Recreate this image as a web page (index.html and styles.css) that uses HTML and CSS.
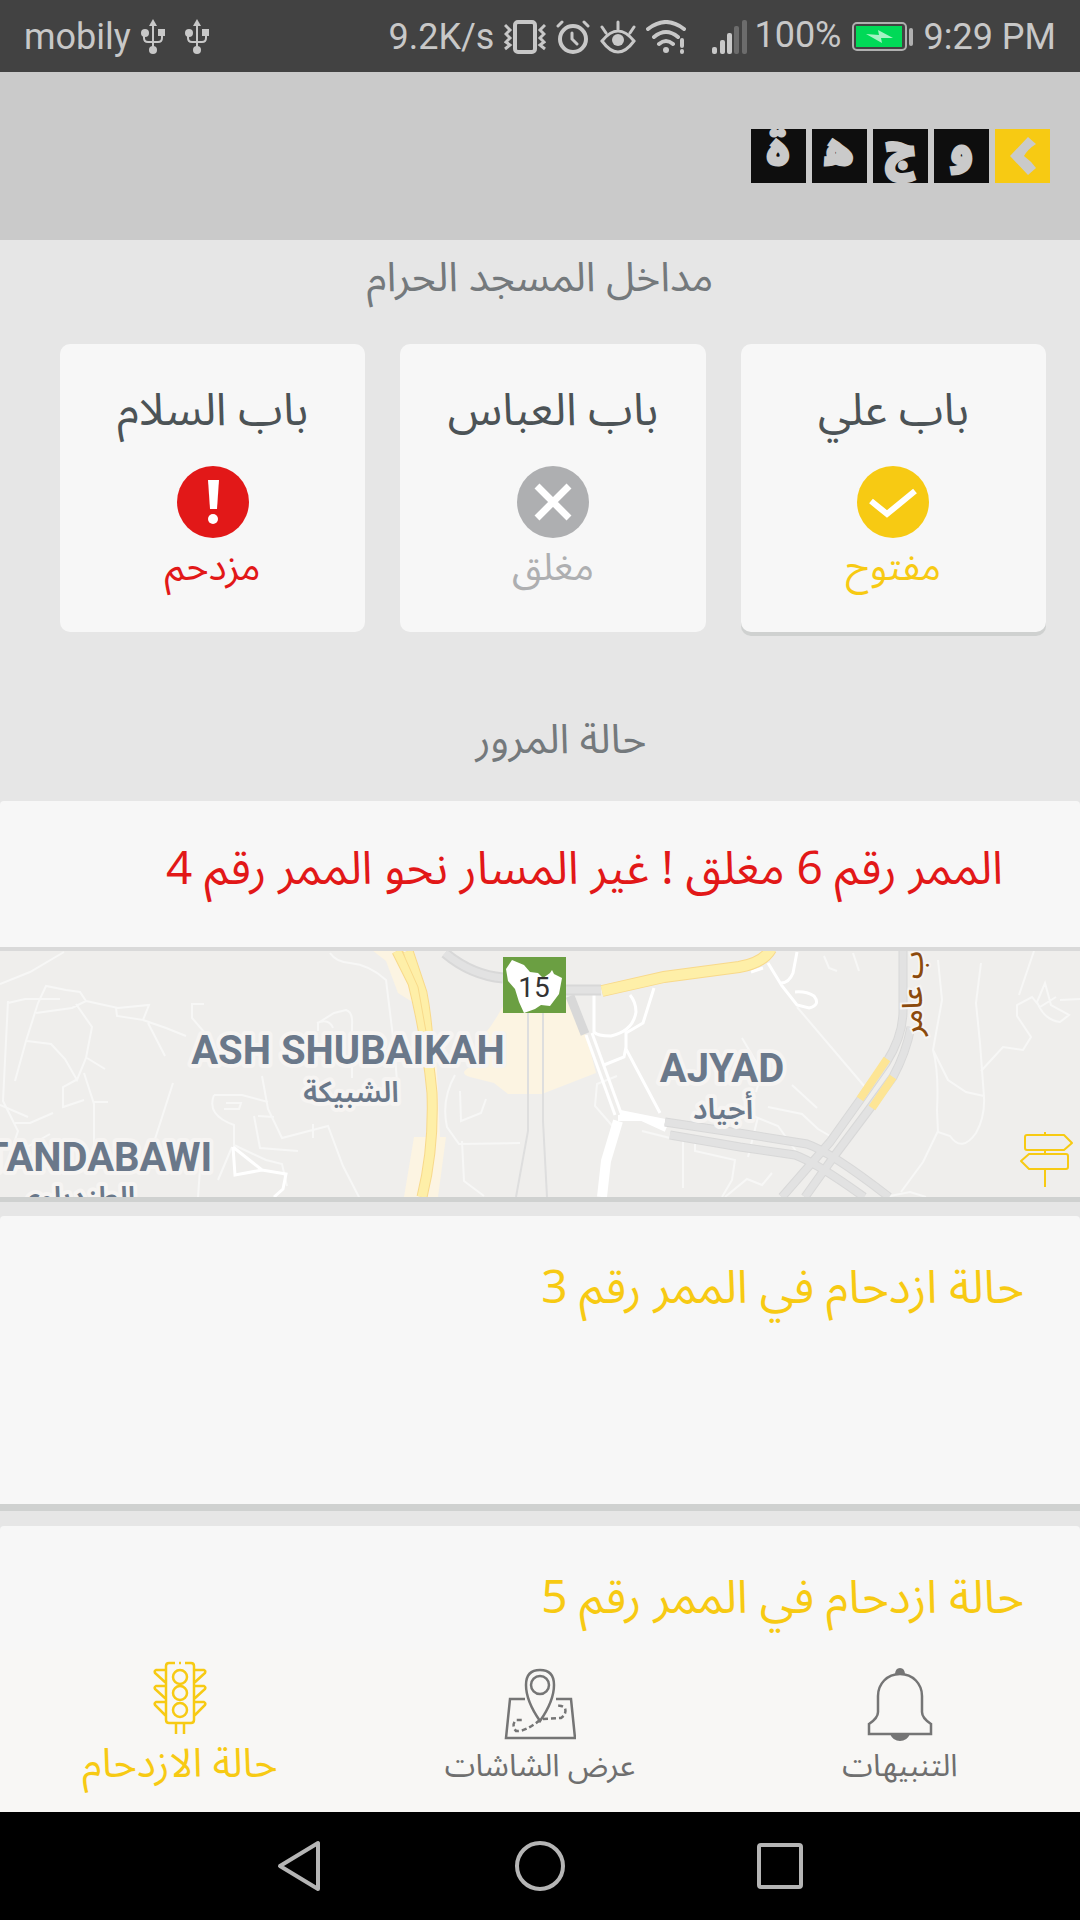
FILE: index.html
```html
<!DOCTYPE html>
<html lang="ar" dir="rtl">
<head>
  <meta charset="UTF-8">
  <meta name="viewport" content="width=device-width, initial-scale=1.0">
  <title>وجهة</title>
<link rel="stylesheet" href="styles.css">
</head>
<body>
<div class="status-bar" dir="ltr">
  <div class="status-left">
    <span>mobily</span>
    <svg class="usb" width="24" height="36" viewBox="0 0 24 36"><path d="M12 5V31M3 14v5q0 4 4 4h10q4 0 4-4v-5" fill="none" stroke="#c8c8c8" stroke-width="2"/><path d="M12 0l4 7H8z" fill="#c8c8c8"/><circle cx="4" cy="14" r="4" fill="#c8c8c8"/><path d="M17 10h7v7h-7z" fill="#c8c8c8"/><circle cx="12" cy="31" r="4" fill="#c8c8c8"/></svg>
    <svg class="usb" width="24" height="36" viewBox="0 0 24 36"><path d="M12 5V31M3 14v5q0 4 4 4h10q4 0 4-4v-5" fill="none" stroke="#c8c8c8" stroke-width="2"/><path d="M12 0l4 7H8z" fill="#c8c8c8"/><circle cx="4" cy="14" r="4" fill="#c8c8c8"/><path d="M17 10h7v7h-7z" fill="#c8c8c8"/><circle cx="12" cy="31" r="4" fill="#c8c8c8"/></svg>
  </div>
  <div class="status-right">
    <span>9.2K/s</span>
    <!-- vibrate -->
    <svg width="42" height="34" viewBox="0 0 42 34" fill="none" stroke="#c8c8c8"><rect x="11" y="2" width="20" height="30" rx="3" stroke-width="4"/><path d="M1 5l5 5-4 4 4 4-4 4 4 3-5 4M41 5l-5 5 4 4-4 4 4 4-4 3 5 4" stroke-width="3"/></svg>
    <!-- alarm -->
    <svg width="34" height="34" viewBox="0 0 34 34" fill="none" stroke="#c8c8c8" stroke-width="4" stroke-linecap="round"><circle cx="17" cy="19" r="13"/><path d="M16 13v6l5 5M2 6l4-4M32 6l-4-4" stroke-width="3"/></svg>
    <!-- eye -->
    <svg width="36" height="34" viewBox="0 0 36 34" fill="none" stroke="#c8c8c8" stroke-width="3" stroke-linecap="round"><path d="M2 21Q10 11 18 11t16 10Q26 32 18 32T2 21zM18 2v8M2 7l4 6M34 7l-4 6"/><circle cx="18" cy="20" r="6" fill="#c8c8c8" stroke="none"/></svg>
    <!-- wifi -->
    <svg width="40" height="34" viewBox="0 0 40 34" fill="none" stroke="#c8c8c8" stroke-width="4" stroke-linecap="round"><path d="M2 9q18-14 36 0M8 17q12-10 24 0M13 24q7-6 14 0M36 20v6M36 31v1"/><circle cx="20" cy="30" r="3" fill="#c8c8c8" stroke="none"/></svg>
    <!-- signal -->
    <svg class="signal" width="36" height="34" viewBox="0 0 36 34"><g fill="#c8c8c8"><rect x="0" y="27" width="5" height="7" rx="2"/><rect x="8" y="20" width="5" height="14" rx="2"/><rect x="15" y="13" width="5" height="21" rx="2"/></g><g fill="#6c6c6c"><rect x="22" y="6" width="5" height="28" rx="2"/><rect x="30" y="0" width="5" height="34" rx="2"/></g></svg>
    <span class="percent">100%</span>
    <svg class="battery" width="62" height="30" viewBox="0 0 62 30"><rect x="1" y="1" width="53" height="27" rx="4" fill="none" stroke="#b0b0b0" stroke-width="2"/><rect x="4" y="4" width="46" height="21" fill="#00d957"/><path d="M14 12l13 1-1-5 15 8-12 0 1 5z" fill="#a5f3c4"/><rect x="57" y="6" width="4" height="18" rx="2" fill="#b0b0b0"/></svg>
    <span>9:29 PM</span>
  </div>
</div>

<header class="header">
  <div class="logo">
    <span class="logo-box logo-arrow"><svg width="26" height="38" viewBox="0 0 26 38"><path d="M18 0l8 7q-8 5-12 12 7 5 12 12l-8 7L0 19z" fill="#cacaca"/></svg></span>
    <span class="logo-box">و</span>
    <span class="logo-box">ج</span>
    <span class="logo-box">ه&zwj;</span>
    <span class="logo-box">ة</span>
  </div>
</header>

<main class="content">
  <h2 class="section-title">مداخل المسجد الحرام</h2>
  <div class="gates">
    <div class="gate open">
      <h3>باب علي</h3>
      <svg width="72" height="72" viewBox="0 0 72 72"><circle cx="36" cy="36" r="36" fill="#f7ca13"/><path d="M14 35l16 13 28-23" fill="none" stroke="#fff" stroke-width="6"/></svg>
      <p>مفتوح</p>
    </div>
    <div class="gate closed">
      <h3>باب العباس</h3>
      <svg width="72" height="72" viewBox="0 0 72 72"><circle cx="36" cy="36" r="36" fill="#aeafb1"/><path d="M20 20l32 32M52 20L20 52" fill="none" stroke="#fff" stroke-width="7"/></svg>
      <p>مغلق</p>
    </div>
    <div class="gate crowded">
      <h3>باب السلام</h3>
      <svg width="72" height="72" viewBox="0 0 72 72"><circle cx="36" cy="36" r="36" fill="#e21818"/><path d="M31 14h11l-2 29h-7z" fill="#fff"/><circle cx="36" cy="53" r="5" fill="#fff"/></svg>
      <p>مزدحم</p>
    </div>
  </div>

  <h2 class="section-title traffic-title">حالة المرور</h2>
  <div class="alert"><p>الممر رقم 6 مغلق ! غير المسار نحو الممر رقم 4</p></div>

  <div class="map">
    <svg viewBox="0 0 1080 246" preserveAspectRatio="xMidYMid slice">
      <rect width="1080" height="246" fill="#efeeec"/>
      <!-- areas -->
      <path d="M350 0h64l14 50 8 50 4 86h6l-8 60h-34l10-60h18l-6-80-12-54-16-10-12-32-18-14z" fill="#fcf4e2"/>
      <path d="M503 55Q494 72 484 84l-14 32q-12 6 0 10l24 6 14 11h34l54-21-9-35-15-38-10-4z" fill="#fcf4e2"/>
      <!-- side streets -->
      <g fill="none" stroke="#f7f7f6" stroke-width="2">
        <path d="M0 33l30-12L64 1M8 52l17-4h35M15 130L26 90l12-38 8-17 20 4 14 2 6 9-14 7-36 5M86 50l32 7 31-3-6 15-26-4-1-8M143 69l23 8 20 8M148 72l17 33M27 90l24 3 14 15 12 21 9-22 6-31-16-23M87 107l18 11M76 129l-13 7v20l21-7M84 122l10 31v42M94 151h14M8 50L3 150l15 30-10 30M0 154l28 12M15 172h15l23-10M20 200l30-17M173 132l-18 56"/>
        <path d="M204 53h-12v14l18 21M330 2q6 9 20 10 20 2 36 17l8 65 5 60M318 80v-8l16-10 12-3q7 2 6 15v53M317 72q12-5 16 5M262 125l6 33 14 29 46-12 15 40 18 35M214 144h28l26 7M214 144q-8 20 20 30v20l32 15 16 4 5 22M258 165l16 1M226 152h15l-2 6h-15M254 165l6 32 38 3M313 173v14M455 124q-14 25-8 52l12 17 61-1M460 140l1 30 20-8 5-14M462 190l2 40 20 15M198 246l4-56M232 196l-14 33"/>
        <path d="M617 125l-20 8-2 22 20 23M642 180l32 8M683 185v52M728 155l50 20 18 25M695 188v12l40 9-3 20-10 17M758 166l-10 40M768 156l34 7 16 15 12 7M792 134l25 23M742 87l20 34-6 20M780 200l18 4 20 13M938 9l4 40-9 50 15 30 18 12 18 4M933 99q6 22 4 60l1 22 12 4q12 17 26-3 9-16 8-36l-4-54-4-40 5-40M938 180l-15 31-22 30M981 120l22-24 20 3 8-13-14-21V54l15-8 8 10 16-10M1034 0l-15 44M1060 49l20-1M1045 32l6 22 18 10-9 7q-16-2-23-20z"/>
        <path d="M797 56l68 80M824 5l5 12 8 3M853 2l6 18M725 246l22-18 15 6 10-12M885 246l25-5 16 5"/>
      </g>
      <g fill="none" stroke="#fff" stroke-width="3">
        <path d="M233 196l2 28 27-5 24 4-3 15-9 8M233 196l29 23M797 1l-4 21q-4 10-12 10M751 21l12-4M594 44v37q3 4 17 4 22-5 25-24 0-10-6-17M654 37l-11 35-17 10 0 16 34 64M626 96l-2 10-20 8M768 12l14 23 15 19 12 3q12-3 5-12-8-5-19-4"/>
        <path d="M586 84l29 80M592 82l29 80"/>
        <path d="M666 178l-24-11h-24M620 162l45 9" stroke-width="6"/>
        <path d="M618 170l-12 40-4 36" stroke-width="10"/>
      </g>
      <!-- gray roads -->
      <g fill="none" stroke="#d8d8d8" stroke-width="9">
        <path d="M445 2q26 22 58 25M565 39h36" stroke-width="11"/>
        <path d="M570 45l15 38"/>
        <path d="M665 171l80 12 62 10q24 8 82 53"/>
        <path d="M670 184l70 12 55 8q22 8 69 42"/>
        <path d="M903 0v60q0 25-17 52l-26 37-30 42-48 55"/>
        <path d="M911 76q-5 26-18 50l-25 34-33 44-30 42"/>
      </g>
      <g fill="none" stroke="#e2e2e2" stroke-width="7">
        <path d="M445 2q26 22 58 25M565 39h36M665 171l80 12 62 10q24 8 82 53M670 184l70 12 55 8q22 8 69 42"/>
        <path d="M903 0v60q0 25-17 52l-26 37-30 42-48 55M911 76q-5 26-18 50l-25 34-33 44-30 42"/>
      </g>
      <path d="M528 60v120l-12 66M543 60v110l4 76" fill="none" stroke="#dedede" stroke-width="2"/>
      <!-- highways -->
      <g fill="none">
        <path d="M397 0l16 32q14 56 19 110 2 56-10 104M408 0l14 42q4 20 6 48" stroke="#f8d98a" stroke-width="11"/>
        <path d="M397 0l16 32q14 56 19 110 2 56-10 104M408 0l14 42q4 20 6 48" stroke="#feefa8" stroke-width="9"/>
        <path d="M402 0l16 36 9 50" stroke="#f8d98a" stroke-width="1"/>
        <path d="M602 40l62-14 75-10q24-4 32-18" stroke="#f8d98a" stroke-width="12"/>
        <path d="M602 40l62-14 75-10q24-4 32-18" stroke="#feefa8" stroke-width="10"/>
        <path d="M887 108l-27 40M893 126l-21 31" stroke="#fde595" stroke-width="8"/>
      </g>
      <!-- route badge -->
      <rect x="503" y="6" width="63" height="56" fill="#6b9f42"/>
      <path d="M506 18l6-9 12 5 6 7 8 1 5 5 7-5 2-3 2 4 8 4-3 16-9 12-9-1-6 4-11 4-5-11-4-13-7-8z" fill="#fff"/>
      <text class="map-badge" x="534" y="46">15</text>
      <!-- labels -->
      <text class="map-name" x="348" y="113">ASH SHUBAIKAH</text>
      <text class="map-name-ar" x="351" y="151">الشبيكة</text>
      <text class="map-name" x="722" y="131">AJYAD</text>
      <text class="map-name-ar" x="723" y="168">أجياد</text>
      <text class="map-name" x="98" y="220">TANDABAWI</text>
      <text class="map-name-ar" x="76" y="256">الطندباوي</text>
      <text class="map-street" transform="translate(922 0) rotate(-90)">ب عامر</text>
      <!-- signpost -->
      <g fill="none" stroke="#f7ca13" stroke-width="2" stroke-linejoin="round"><path d="M1045 181v3M1045 199v4M1045 218v18M1027 184h37l8 8-8 7h-37q-2 0-2-2v-11q0-2 2-2zM1066 203h-37l-8 7 8 8h37q2 0 2-2v-11q0-2-2-2z"/></g>
    </svg>
  </div>

  <div class="road"><p>حالة ازدحام في الممر رقم 3</p></div>
  <div class="road"><p>حالة ازدحام في الممر رقم 5</p></div>
</main>

<nav class="tabs">
  <a class="tab" href="#alerts">
    <svg width="72" height="74" viewBox="0 0 72 74"><path d="M36 7C23 7 14 17 14 29v16q0 6-9 12v10h62V57q-9-6-9-12V29C58 17 49 7 36 7z" fill="none" stroke="#757575" stroke-width="2.5"/><path d="M31 8q0-7 5-7t5 7zM26 67h20q-3 7-10 7t-10-7z" fill="#757575"/></svg>
    <span>التنبيهات</span>
  </a>
  <a class="tab" href="#screens">
    <svg width="72" height="74" viewBox="0 0 72 74" fill="none" stroke="#757575" stroke-width="2.5"><path d="M21 32H6L2 71h69l-4-39H52M36 54Q22 34 22 18 22 3 36 3t14 15q0 16-14 36z"/><circle cx="36" cy="18" r="9"/><path d="M36 53q-15 12-24 11-5-6 0-11h6M39 52l18-1q6-4 4-10-3-3-8-2" stroke-dasharray="5 3"/></svg>
    <span>عرض الشاشات</span>
  </a>
  <a class="tab active" href="#traffic">
    <svg width="72" height="74" viewBox="0 0 72 74" fill="none" stroke="#f7ca13" stroke-width="2.5"><path d="M31 2h-6q-3 0-3 3v54q0 3 3 3h22q3 0 3-3V5q0-3-3-3h-6M35 2h2M32 62v11M40 62v11M22 9H12q-2 1-1 3l11 10M22 25H12q-2 1-1 3l11 10M22 41H12q-2 1-1 3l11 11M50 9h10q2 1 1 3L50 22M50 25h10q2 1 1 3L50 38M50 41h10q2 1 1 3L50 55"/><circle cx="36" cy="16" r="7"/><circle cx="36" cy="32" r="7"/><circle cx="36" cy="49" r="7"/></svg>
    <span>حالة الازدحام</span>
  </a>
</nav>

<div class="system-bar" dir="ltr">
  <button aria-label="Back"><svg width="52" height="52" viewBox="0 0 52 52"><path d="M44 3v46L6 26z"/></svg></button>
  <button aria-label="Home"><svg width="52" height="52" viewBox="0 0 52 52"><circle cx="26" cy="26" r="23"/></svg></button>
  <button aria-label="Recent"><svg width="52" height="52" viewBox="0 0 52 52"><rect x="5" y="5" width="42" height="42" rx="2"/></svg></button>
</div>
</body>
</html>
```
FILE: styles.css
```css
* {
  box-sizing: border-box;
}

body {
  margin: 0;
  height: 100vh;
  display: flex;
  flex-direction: column;
  overflow: hidden;
  background-color: #e6e6e6;
  font-family: "Noto Sans Arabic", "Open Sans", "DejaVu Sans", sans-serif;
}

h2, h3, p {
  margin: 0;
  font-weight: normal;
}

svg {
  display: block;
  flex-shrink: 0;
}

.status-bar {
  height: 72px;
  flex-shrink: 0;
  padding: 2px 24px 0;
  display: flex;
  justify-content: space-between;
  align-items: center;
  background-color: #424242;
  color: #c8c8c8;
  font-family: Roboto, sans-serif;
  font-size: 36px;
}

.status-left, .status-right {
  display: flex;
  align-items: center;
  gap: 10px;
}

.usb + .usb {
  margin-left: 10px;
}

.signal {
  margin-left: 16px;
}

.percent {
  margin-left: -4px;
  padding-bottom: 4px;
}

.header {
  height: 168px;
  flex-shrink: 0;
  padding: 0 30px;
  display: flex;
  align-items: center;
  background-color: #cacaca;
}

.logo {
  display: flex;
  gap: 6px;
}

.logo-box {
  width: 55px;
  height: 54px;
  padding-bottom: 8px;
  display: flex;
  justify-content: center;
  align-items: center;
  background-color: #0e0e0e;
  color: #cacaca;
  font-size: 42px;
  line-height: 40px;
  font-weight: 900;
  -webkit-text-stroke: 3px #cacaca;
}

.logo-arrow {
  padding-bottom: 0;
  background-color: #f7ca13;
}

.content {
  flex: 1;
  min-height: 0;
}

.section-title {
  height: 104px;
  padding-top: 8px;
  text-align: center;
  font-size: 41px;
  line-height: 60px;
  color: #74797c;
}

.traffic-title {
  height: 169px;
  padding-top: 78px;
  padding-left: 42px;
}

.gates {
  display: grid;
  grid-template-columns: repeat(3, 1fr);
  gap: 35px;
  padding: 0 34px 0 60px;
}

.gate {
  height: 288px;
  padding-top: 32px;
  display: flex;
  flex-direction: column;
  align-items: center;
  border-radius: 10px;
  background-color: #f7f7f7;
}

.gate h3 {
  margin-bottom: 20px;
  font-size: 45px;
  line-height: 70px;
  color: #4c5356;
}

.gate p {
  font-size: 38px;
  line-height: 60px;
}

.open {
  box-shadow: 0 4px #cfd1d0;
}

.open p {
  color: #f7ca13;
}

.closed p {
  color: #aeafb1;
}

.crowded p {
  color: #e21818;
}

.alert {
  height: 150px;
  padding: 34px 77px 0;
  background-color: #f7f7f7;
  border-bottom: 4px solid #d9d9d9;
  border-radius: 4px 4px 0 0;
  color: #e21818;
  font-size: 46px;
  line-height: 70px;
}

.map {
  border-bottom: 5px solid #cfd1d0;
  margin-bottom: 14px;
}

.map svg {
  width: 100%;
  height: 246px;
}

.map-name {
  font: bold 40px Roboto, sans-serif;
}

.map-name-ar {
  font-size: 29px;
  font-weight: 600;
}

.map-name, .map-name-ar {
  text-anchor: middle;
  fill: #6a788a;
  stroke: #f6f4f2;
  stroke-width: 8px;
  stroke-linejoin: round;
  paint-order: stroke;
}

.map-badge {
  font: 28px Roboto, sans-serif;
  text-anchor: middle;
  fill: #333333;
}

.map-street {
  font-size: 28px;
  font-weight: 500;
  fill: #8b4a0c;
  stroke: #f6f4f2;
  stroke-width: 4px;
  paint-order: stroke;
}

.road {
  height: 295px;
  margin-bottom: 15px;
  padding: 38px 56px 0;
  background-color: #f7f7f7;
  border-bottom: 7px solid #cfd1d0;
  border-radius: 4px 4px 0 0;
  color: #f7ca13;
  font-size: 46px;
  line-height: 70px;
}

.tabs {
  position: relative;
  height: 162px;
  flex-shrink: 0;
  display: grid;
  grid-template-columns: repeat(3, 1fr);
  background-color: #f8f7f5;
}

.tab {
  padding-top: 17px;
  display: flex;
  flex-direction: column;
  align-items: center;
  color: #6f6f6f;
  font-size: 31px;
  line-height: 50px;
  text-decoration: none;
}

.tab.active {
  padding-top: 11px;
  color: #f7ca13;
  font-size: 40px;
  line-height: 60px;
}

.system-bar {
  position: relative;
  height: 108px;
  flex-shrink: 0;
  display: flex;
  justify-content: center;
  align-items: center;
  gap: 188px;
  background-color: #000000;
}

.system-bar button {
  padding: 0;
  border: none;
  background: none;
}

.system-bar svg {
  fill: none;
  stroke: #b5b5b5;
  stroke-width: 4px;
  stroke-linejoin: round;
}
```
